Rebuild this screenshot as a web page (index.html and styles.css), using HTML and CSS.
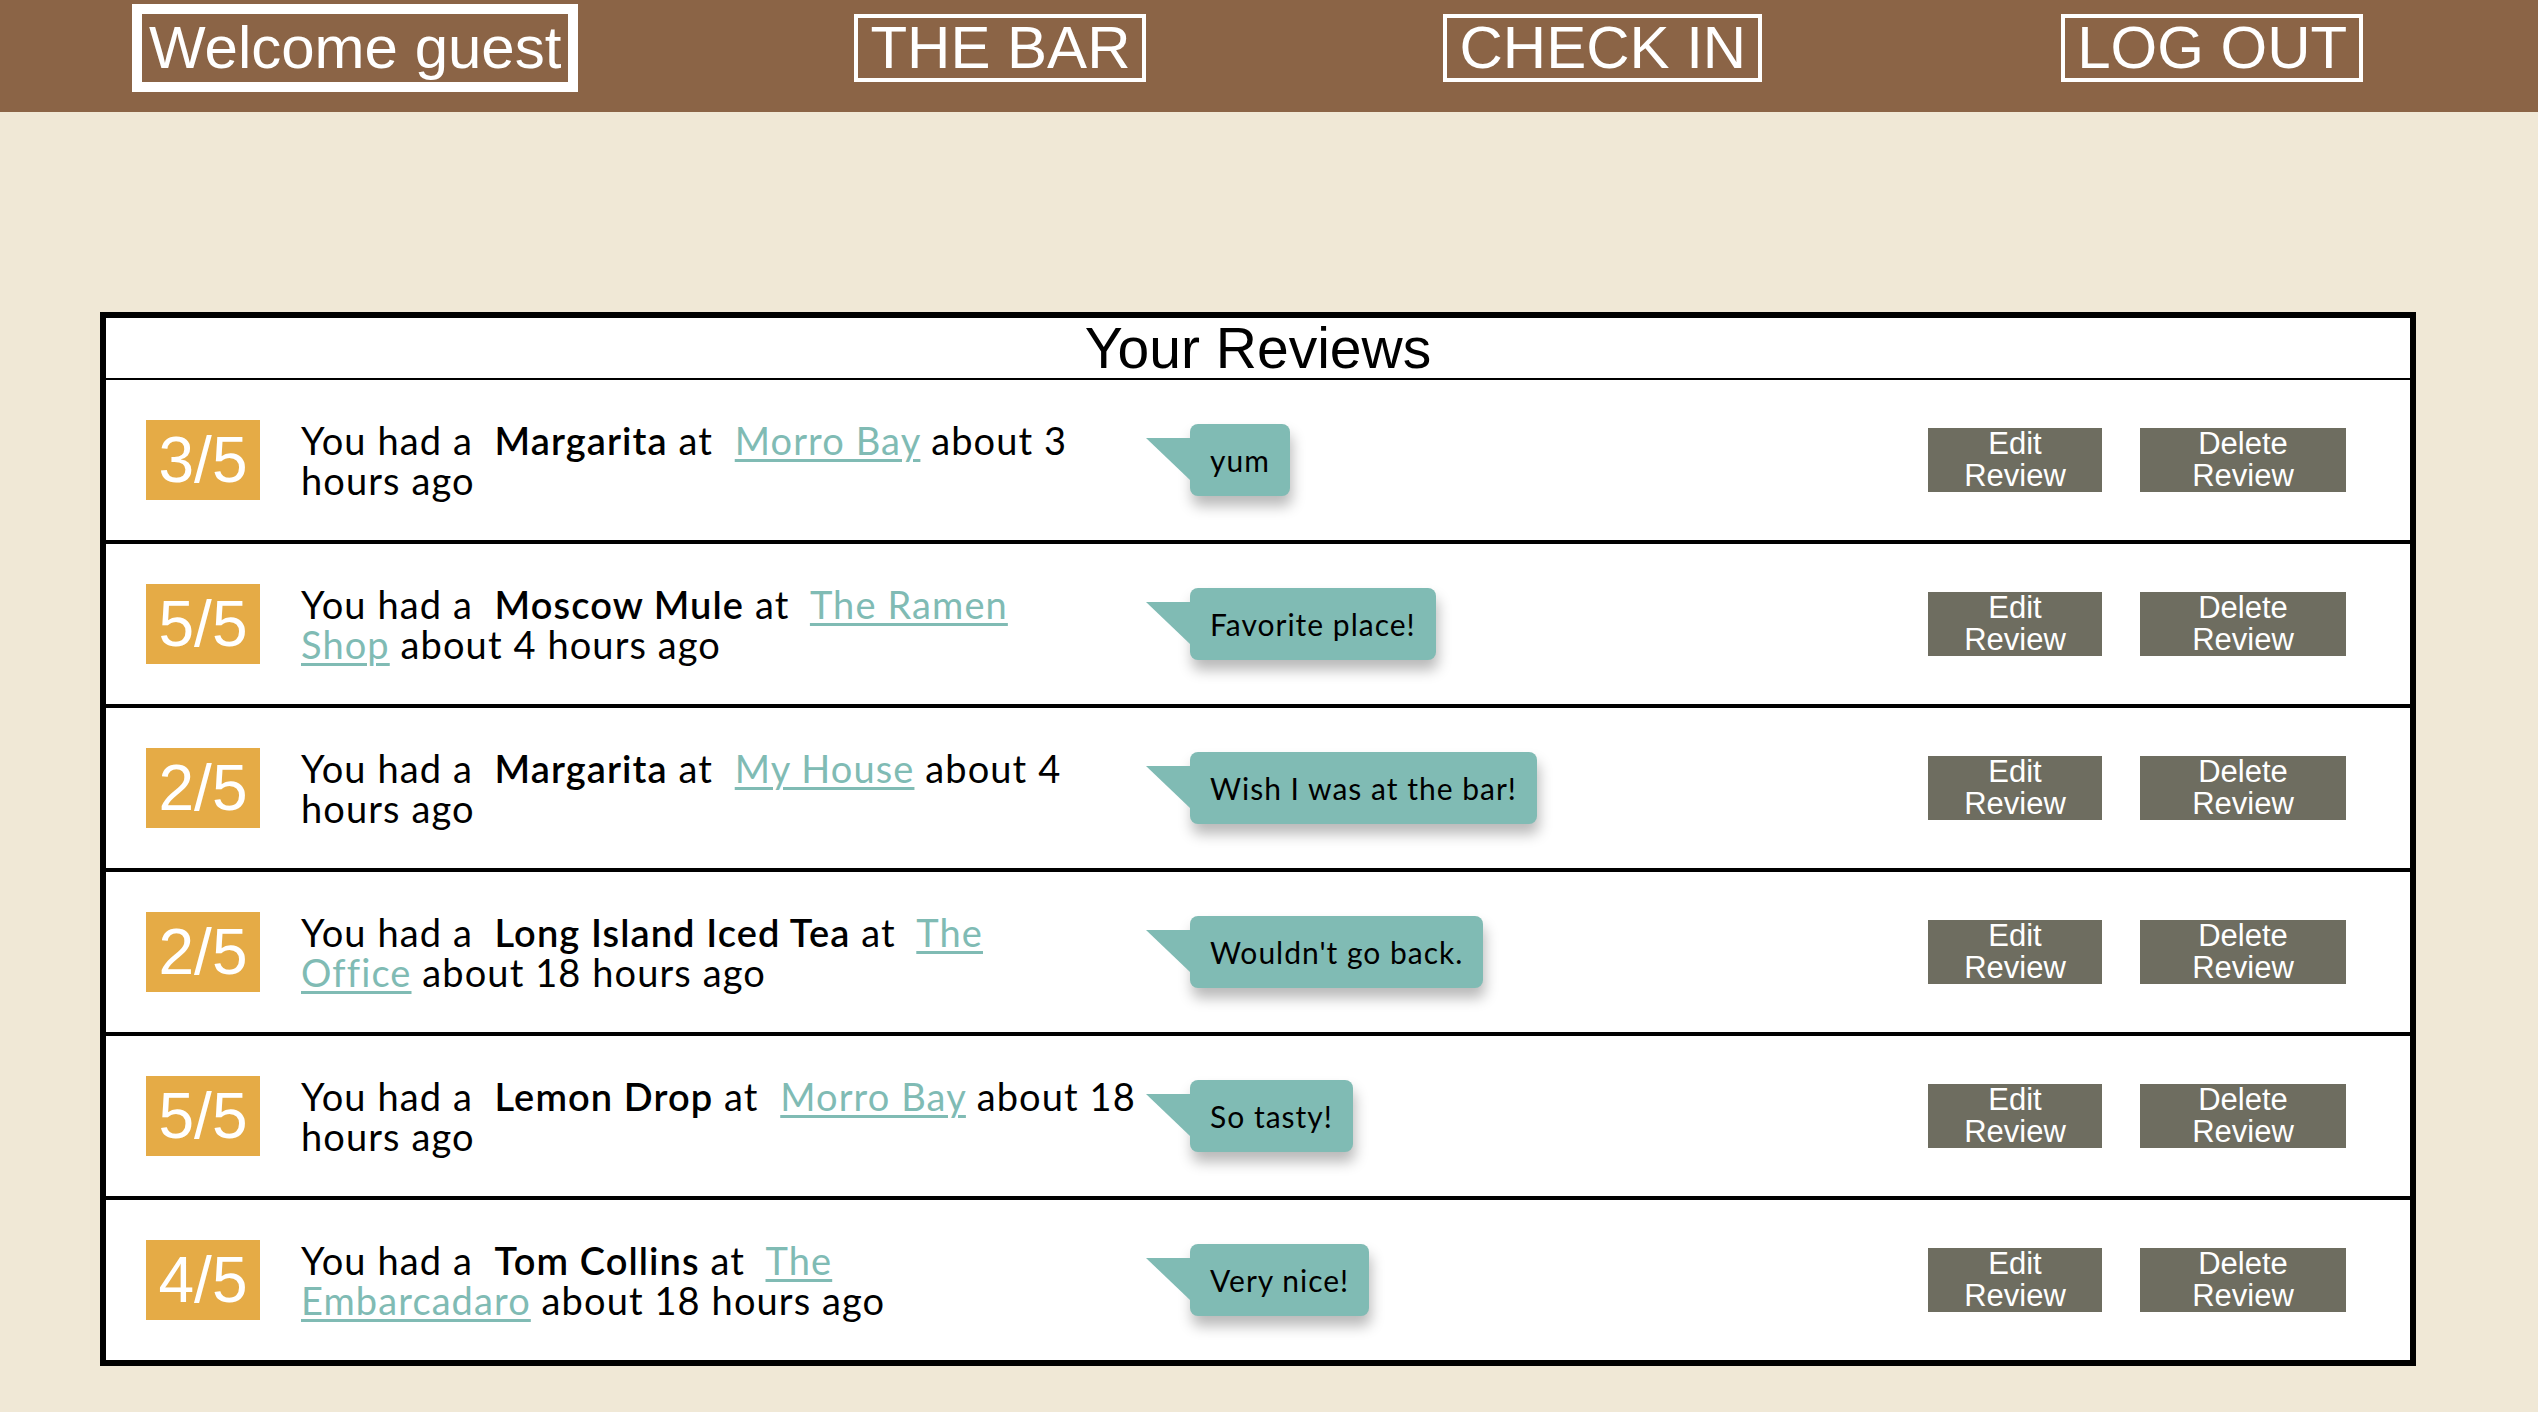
FILE: index.html
```html
<!DOCTYPE html>
<html lang="en">
<head>
<meta charset="utf-8">
<title>Your Reviews</title>
<link rel="stylesheet" href="styles.css">
</head>
<body>
<header class="topbar">
  <div class="nav-box nav-welcome">Welcome guest</div>
  <a class="nav-box nav-bar" href="#">THE BAR</a>
  <a class="nav-box nav-checkin" href="#">CHECK IN</a>
  <a class="nav-box nav-logout" href="#">LOG OUT</a>
</header>

<main class="reviews">
  <div class="reviews-title">Your Reviews</div>

  <div class="review-row">
    <div class="rating">3/5</div>
    <div class="review-text">You had a&nbsp; <b>Margarita</b> at&nbsp; <a href="#">Morro Bay</a> about 3<br>hours ago</div>
    <div class="bubble">yum</div>
    <button class="btn btn-edit">Edit<br>Review</button>
    <button class="btn btn-delete">Delete<br>Review</button>
  </div>

  <div class="review-row">
    <div class="rating">5/5</div>
    <div class="review-text">You had a&nbsp; <b>Moscow Mule</b> at&nbsp; <a href="#">The Ramen<br>Shop</a> about 4 hours ago</div>
    <div class="bubble">Favorite place!</div>
    <button class="btn btn-edit">Edit<br>Review</button>
    <button class="btn btn-delete">Delete<br>Review</button>
  </div>

  <div class="review-row">
    <div class="rating">2/5</div>
    <div class="review-text">You had a&nbsp; <b>Margarita</b> at&nbsp; <a href="#">My House</a> about 4<br>hours ago</div>
    <div class="bubble">Wish I was at the bar!</div>
    <button class="btn btn-edit">Edit<br>Review</button>
    <button class="btn btn-delete">Delete<br>Review</button>
  </div>

  <div class="review-row">
    <div class="rating">2/5</div>
    <div class="review-text">You had a&nbsp; <b>Long Island Iced Tea</b> at&nbsp; <a href="#">The<br>Office</a> about 18 hours ago</div>
    <div class="bubble">Wouldn't go back.</div>
    <button class="btn btn-edit">Edit<br>Review</button>
    <button class="btn btn-delete">Delete<br>Review</button>
  </div>

  <div class="review-row">
    <div class="rating">5/5</div>
    <div class="review-text">You had a&nbsp; <b>Lemon Drop</b> at&nbsp; <a href="#">Morro Bay</a> about 18<br>hours ago</div>
    <div class="bubble">So tasty!</div>
    <button class="btn btn-edit">Edit<br>Review</button>
    <button class="btn btn-delete">Delete<br>Review</button>
  </div>

  <div class="review-row">
    <div class="rating">4/5</div>
    <div class="review-text">You had a&nbsp; <b>Tom Collins</b> at&nbsp; <a href="#">The<br>Embarcadaro</a> about 18 hours ago</div>
    <div class="bubble">Very nice!</div>
    <button class="btn btn-edit">Edit<br>Review</button>
    <button class="btn btn-delete">Delete<br>Review</button>
  </div>
</main>
</body>
</html>
```

FILE: styles.css
```css
* {
  box-sizing: border-box;
}

html, body {
  margin: 0;
  padding: 0;
}

body {
  background: #f0e8d6;
  font-family: "Liberation Sans", Arial, sans-serif;
  color: #000;
  min-height: 1412px;
}

/* ---------- top bar ---------- */
.topbar {
  display: flex;
  align-items: center;
  height: 112px;
  padding: 0 0 16px 132px;
  background: #8b6446;
}

.nav-box {
  display: block;
  color: #fff;
  text-decoration: none;
  font-family: "Liberation Sans", Arial, sans-serif;
  font-size: 60px;
  line-height: 60px;
  border: 4px solid #fff;
  padding: 0 12px;
  white-space: nowrap;
}

.nav-welcome {
  border-width: 10px;
  line-height: 68px;
  padding: 0 7px;
}

.nav-bar {
  margin-left: 276px;
}

.nav-checkin {
  margin-left: 297px;
}

.nav-logout {
  margin-left: 299px;
}

/* ---------- reviews table ---------- */
.reviews {
  margin: 200px 0 0 100px;
  width: 2316px;
  background: #fff;
  border: 6px solid #000;
}

.reviews-title {
  height: 62px;
  line-height: 60px;
  text-align: center;
  font-family: "Liberation Sans", Arial, sans-serif;
  font-size: 57px;
  border-bottom: 2px solid #000;
}

.review-row {
  display: flex;
  align-items: center;
  height: 164px;
  padding: 0 64px 0 40px;
  border-top: 4px solid #000;
}

.reviews-title + .review-row {
  height: 160px;
  border-top: 0;
}

.rating {
  flex: none;
  width: 114px;
  height: 80px;
  background: #e5ab46;
  color: #fff;
  font-family: "Liberation Sans", Arial, sans-serif;
  font-size: 64px;
  line-height: 80px;
  text-align: center;
}

.review-text {
  flex: none;
  width: 845px;
  margin-left: 41px;
  font-family: Lato, "Open Sans", sans-serif;
  font-size: 38px;
  letter-spacing: 1.1px;
  line-height: 40px;
  white-space: nowrap;
}

.review-text b {
  font-weight: 600;
}

.review-text a {
  color: #80bbb4;
  text-decoration: underline;
  text-decoration-thickness: 3px;
  text-underline-offset: 4px;
}

.bubble {
  position: relative;
  flex: none;
  margin-left: 44px;
  height: 72px;
  padding: 0 20px;
  line-height: 72px;
  background: #80bbb4;
  border-radius: 8px;
  font-family: Lato, "Open Sans", sans-serif;
  font-size: 30px;
  letter-spacing: 1px;
  color: #000;
  box-shadow: 2px 10px 14px rgba(0, 0, 0, 0.28);
}

.bubble::before {
  content: "";
  position: absolute;
  left: -44px;
  top: 14px;
  width: 0;
  height: 0;
  border-top: 42px solid #80bbb4;
  border-left: 44px solid transparent;
}

.btn {
  flex: none;
  height: 64px;
  padding: 0;
  border: 0;
  border-radius: 0;
  background: #6e6d60;
  color: #fff;
  font-family: "Liberation Sans", Arial, sans-serif;
  font-size: 31px;
  line-height: 32px;
  text-align: center;
  cursor: pointer;
}

.btn-edit {
  width: 174px;
  margin-left: auto;
}

.btn-delete {
  width: 206px;
  margin-left: 38px;
}
```
